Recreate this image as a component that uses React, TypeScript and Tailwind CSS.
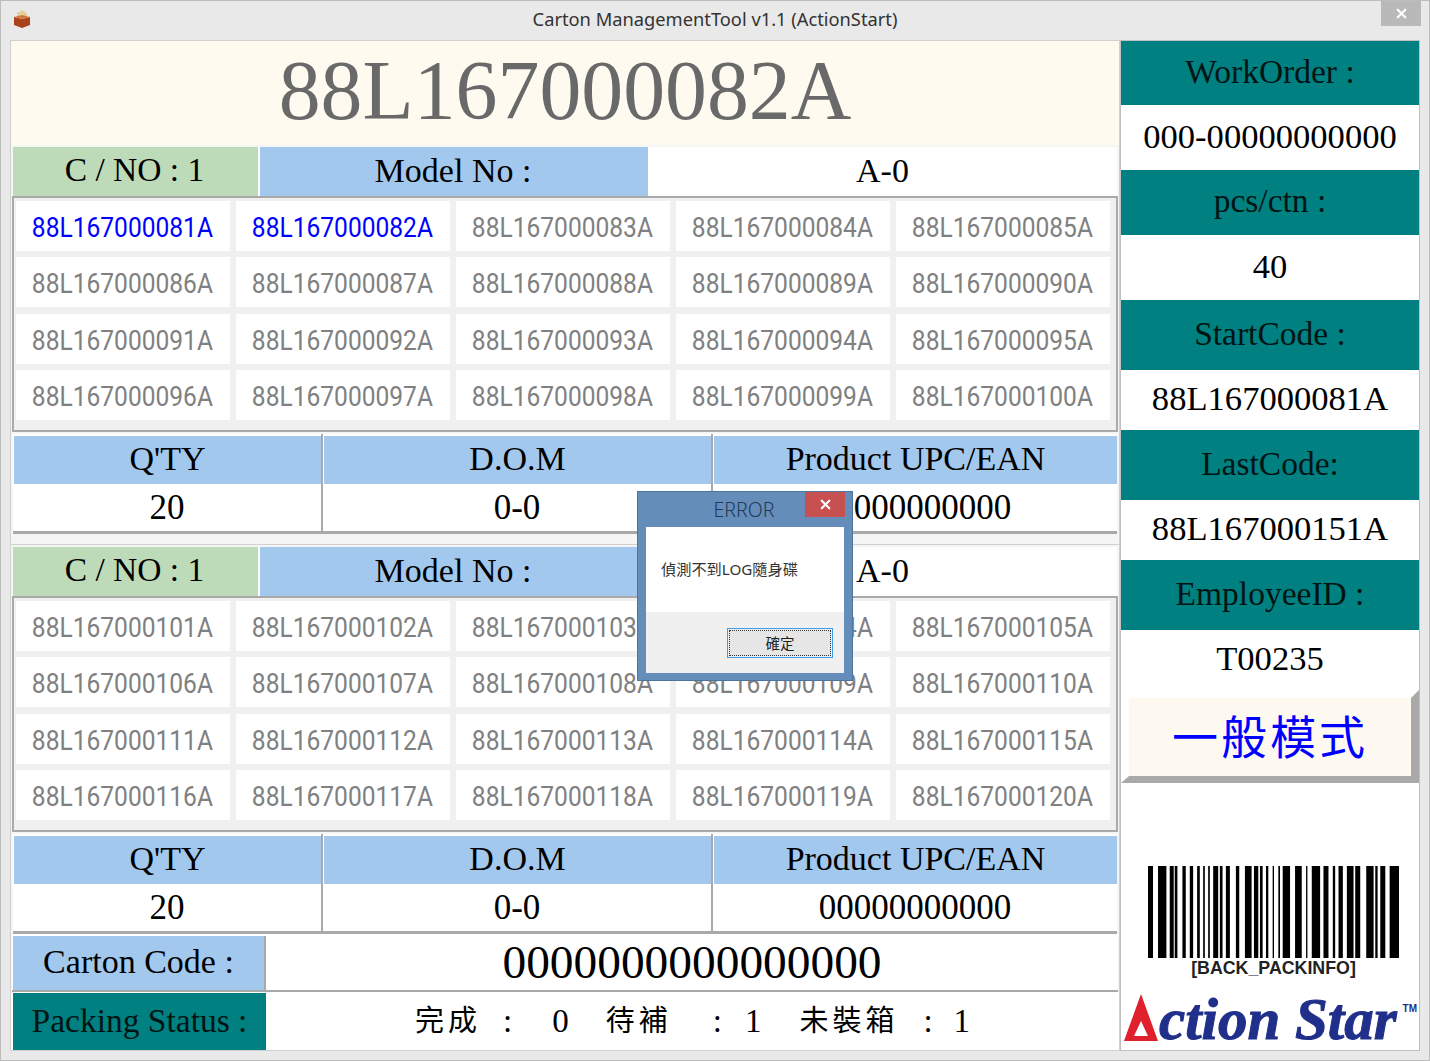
import { X } from "lucide-react";

const serif = "font-['Liberation_Serif','Noto_Sans_CJK_TC',serif]";

const firstCodes = Array.from({ length: 20 }, (_, i) => {
  const n = 81 + i;
  return n < 100 ? `88L1670000${n}A` : `88L167000${n}A`;
});
const secondCodes = Array.from({ length: 20 }, (_, i) => `88L167000${101 + i}A`);

const sideRows = [
  { label: "WorkOrder :", value: "000-00000000000", labelH: "h-[64px]", valueH: "h-[65px]" },
  { label: "pcs/ctn :", value: "40", labelH: "h-[65px]", valueH: "h-[65px]" },
  { label: "StartCode :", value: "88L167000081A", labelH: "h-[70px]", valueH: "h-[60px]" },
  { label: "LastCode:", value: "88L167000151A", labelH: "h-[70px]", valueH: "h-[60px]" },
  { label: "EmployeeID :", value: "T00235", labelH: "h-[70px]", valueH: "h-[60px]" },
];

// bar edges read off the reference at 3x
const bars = [
  [115, 130], [145, 170], [180, 192], [195, 203], [218, 228], [240, 250], [262, 270], [280, 285],
  [295, 300], [310, 325], [330, 338], [348, 360], [378, 388], [405, 425], [432, 445], [450, 458],
  [468, 475], [488, 492], [505, 510], [518, 540], [555, 575], [588, 592], [605, 630], [640, 655],
  [668, 675], [685, 698], [710, 730], [735, 750], [768, 790], [795, 802], [810, 825], [838, 866],
];

function CodeGrid({ codes, active = 0 }: { codes: string[]; active?: number }) {
  return (
    <div className="h-[236px] border-2 border-[#a9a9a9] bg-[#f0f0f0] mx-px px-[2px] pt-[3px] grid grid-cols-[214px_214px_214px_214px_214px] grid-rows-[50px_50px_50px_50px] gap-x-[6px] gap-y-[6.33px]">
      {codes.map((code, i) => (
        <div key={code} className="flex items-center justify-center bg-white pt-[3px] pr-[2px]">
          <span
            className={`inline-block whitespace-nowrap scale-x-[0.893] font-['Roboto',sans-serif] text-[27.5px] ${
              i < active ? "text-[#0000ff]" : "text-[#808080]"
            }`}
          >
            {code}
          </span>
        </div>
      ))}
    </div>
  );
}

function QtyColumn({ title, value, divider }: { title: string; value: string; divider?: boolean }) {
  return (
    <div className={`flex flex-col min-h-0 ${divider ? "border-r-[2px] border-[#a9a9a9]" : ""}`}>
      <div className="h-[48px] mt-[2px] ml-px pb-[4px] bg-[#a3c8ee] flex items-center justify-center text-[34px]">{title}</div>
      <div className="flex-1 flex items-center justify-center text-[35px] leading-none">{value}</div>
    </div>
  );
}

function CartonBlock({ codes, upc, active }: { codes: string[]; upc: string; active?: number }) {
  return (
    <div className="flex flex-col">
      <div className="h-[49px] flex bg-white text-[34px] text-black mx-[2px]">
        <div className="w-[245px] pb-[2px] pr-[2px] bg-[#bddbb9] flex items-center justify-center text-[33.5px]">C / NO : 1</div>
        <div className="w-[388px] ml-[2px] pb-[2px] pr-[2px] bg-[#a3c8ee] flex items-center justify-center">Model No :</div>
        <div className="flex-1 pb-[2px] flex items-center justify-center">A-0</div>
      </div>
      <CodeGrid codes={codes} active={active} />
      <div className="h-[2px]" />
      <div className="h-[100px] mx-[2px] border-b-[3px] border-[#a9a9a9] grid grid-cols-[310px_390px_1fr] grid-rows-[97px] bg-white text-black">
        <QtyColumn title="Q'TY" value="20" divider />
        <QtyColumn title="D.O.M" value="0-0" divider />
        <QtyColumn title="Product UPC/EAN" value={upc} />
      </div>
    </div>
  );
}

function Barcode() {
  return (
    <svg width="251" height="92" viewBox="115 0 751 92" preserveAspectRatio="none" className="block">
      {bars.map(([a, b]) => (
        <rect key={a} x={a} y="0" width={b - a} height="92" fill="#000" />
      ))}
    </svg>
  );
}

function CartonIcon() {
  return (
    <svg width="18" height="20" viewBox="0 0 18 20">
      <path d="M4 3h3l1-2 3 1 3 2v4H4z" fill="#e6cf9a" />
      <path d="M1 8l8 2 8-2v8l-8 3-8-3z" fill="#a8431c" />
      <path d="M1 8l8 2 8-2-8-2z" fill="#d2763c" />
    </svg>
  );
}

function ErrorDialog() {
  return (
    <div className="absolute left-[636px] top-[490px] w-[216px] h-[190px] bg-[#658dba] border border-[#4d749f] flex flex-col font-['Noto_Sans','Noto_Sans_CJK_TC',sans-serif]">
      <div className="h-[35px] relative flex items-center justify-center text-[19.5px] text-[#1f3a58] pr-[2px] font-light">
        ERROR
        <div className="absolute right-[7px] top-0 w-[40px] h-[25px] bg-[#c75050] flex items-center justify-center">
          <X size={15} strokeWidth={3.5} className="text-white" />
        </div>
      </div>
      <div className="mx-[8px] h-[85px] bg-white flex items-center pl-[15px] text-[15.2px] text-[#333]">
        偵測不到LOG隨身碟
      </div>
      <div className="mx-[8px] h-[61px] bg-[#f0f0f0] flex justify-end pr-[11px] pt-[16px]">
        <div className="w-[106px] h-[30px] border border-[#3c9ce8] p-px">
          <div className="h-full border border-dotted border-[#333] bg-[#e6e6e6] flex items-center justify-center text-[14.5px] leading-none text-[#222]">
            確定
          </div>
        </div>
      </div>
    </div>
  );
}

export default function App() {
  return (
    <div className={`relative w-[1430px] h-[1061px] overflow-hidden bg-[#e9e9e9] border border-[#bdbdbd] ${serif}`}>
      <div className="h-[39px] relative flex items-center justify-center font-['Noto_Sans',sans-serif] text-[18.3px] text-[#333] pb-[4px]">
        <div className="absolute left-[12px] top-[8px]">
          <CartonIcon />
        </div>
        Carton ManagementTool v1.1 (ActionStart)
        <div className="absolute right-[8px] top-0 w-[40px] h-[25px] bg-[#b9b9b9] flex items-center justify-center">
          <X size={15} strokeWidth={3.5} className="text-white" />
        </div>
      </div>

      <div className="flex ml-[9px] w-[1410px] h-[1011px]">
        <div className="w-[1110px] h-full bg-[#f5f5f5] border border-[#d0d0d0] flex flex-col">
          <div className="h-[104px] shrink-0 pb-[5px] bg-[#fffaf0] flex items-center justify-center text-[83.8px] text-[#696969] mb-[2px]">
            88L167000082A
          </div>
          <CartonBlock codes={firstCodes} upc="00000000000" active={2} />
          <div className="h-[11px] border-b border-[#d0d0d0]" />
          <div className="h-[2px]" />
          <CartonBlock codes={secondCodes} upc="00000000000" />
          <div className="h-[58px] shrink-0 pt-[2px] mx-[1px] flex bg-white border-b-[2px] border-[#a9a9a9] text-black">
            <div className="w-[253px] pb-[4px] ml-px bg-[#a3c8ee] border-r-[2px] border-[#a9a9a9] flex items-center justify-center text-[34px]">
              Carton Code :
            </div>
            <div className="flex-1 flex items-center justify-center text-[47.4px]">0000000000000000</div>
          </div>
          <div className="flex-1 flex bg-white text-black pt-px">
            <div className="w-[253px] bg-[#008080] ml-[2px] flex items-center justify-center text-[33.5px] text-[#001414]">
              Packing Status :
            </div>
            <div className="flex-1 flex items-center pl-[149px] text-[33px]">
              <span className="text-[29px] tracking-[4px]">完成</span>
              <span className="ml-[22px]">:</span>
              <span className="ml-[40px]">0</span>
              <span className="ml-[37px] text-[29px] tracking-[4px]">待補</span>
              <span className="ml-[41px]">:</span>
              <span className="ml-[23px]">1</span>
              <span className="ml-[38px] text-[29px] tracking-[4px]">未裝箱</span>
              <span className="ml-[25px]">:</span>
              <span className="ml-[21px]">1</span>
            </div>
          </div>
        </div>

        <div className="w-[300px] h-full bg-white border border-[#c0c0c0] flex flex-col text-black">
          {sideRows.map((row) => (
            <div key={row.label}>
              <div className={`${row.labelH} pb-[2px] bg-[#008080] text-[#001414] text-[33.5px] flex items-center justify-center`}>
                {row.label}
              </div>
              <div className={`${row.valueH} pb-[2px] text-[34.6px] flex items-center justify-center`}>{row.value}</div>
            </div>
          ))}
          <div className="h-[93px] pb-[5px] border-t-[8px] border-l-[8px] border-r-[8px] border-b-[7px] border-t-white border-l-white border-r-[#a9a9a9] border-b-[#a9a9a9] bg-[#fdf9f0] flex items-center justify-center font-['Noto_Sans_CJK_TC',serif] text-[46px] tracking-[3px] text-[#0000ff]">
            一般模式
          </div>
          <div className="mt-[83px] ml-[7px] flex flex-col items-center">
            <Barcode />
            <div className="font-['Liberation_Sans',sans-serif] font-bold text-[17.8px] leading-[18px] text-[#222] mt-[1px]">
              [BACK_PACKINFO]
            </div>
          </div>
          <div className="mt-[16px] ml-[2px] flex items-end h-[52px] relative">
            <svg width="36" height="50" viewBox="0 0 36 50" className="shrink-0 mb-[2px]">
              <path fillRule="evenodd" d="M18 1L35 48H1zM18 28L11 43H25z" fill="#e0202c" />
            </svg>
            <span className="whitespace-nowrap font-bold italic text-[59px] leading-[52px] text-[#20308a] [-webkit-text-stroke:1px_#20308a]">
              ction Star
            </span>
            <span className="absolute right-[2px] top-[10px] font-['Liberation_Sans',sans-serif] font-bold text-[10px] leading-[12px] text-[#20308a]">
              TM
            </span>
          </div>
        </div>
      </div>

      <ErrorDialog />
    </div>
  );
}
